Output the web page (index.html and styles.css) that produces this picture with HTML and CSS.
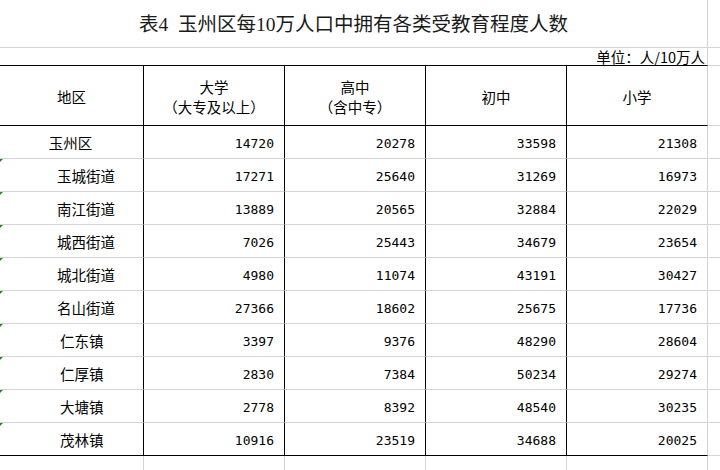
FILE: index.html
```html
<!DOCTYPE html>
<html lang="zh-CN">
<head>
<meta charset="utf-8">
<title>表4 玉州区每10万人口中拥有各类受教育程度人数</title>
<link rel="stylesheet" href="styles.css">
</head>
<body>
<div class="sheet">
  <div class="c title span5 g gb">表4&nbsp;&nbsp;玉州区每10万人口中拥有各类受教育程度人数</div>
  <div class="c gb"></div>

  <div class="c unit span5 g bb">单位：人/10万人</div>
  <div class="c gb"></div>

  <div class="c hd v bb">地区</div>
  <div class="c hd v bb"><span>大学<br>（大专及以上）</span></div>
  <div class="c hd v bb"><span>高中<br>（含中专）</span></div>
  <div class="c hd v bb">初中</div>
  <div class="c hd g bb">小学</div>
  <div class="c gb"></div>

  <div class="c name ctr v gb">玉州区</div>
  <div class="c n v gb">14720</div><div class="c n v gb">20278</div><div class="c n v gb">33598</div><div class="c n g gb">21308</div><div class="c gb"></div>

  <div class="c name sub4 mark v gb">玉城街道</div>
  <div class="c n v gb">17271</div><div class="c n v gb">25640</div><div class="c n v gb">31269</div><div class="c n g gb">16973</div><div class="c gb"></div>

  <div class="c name sub4 mark v gb">南江街道</div>
  <div class="c n v gb">13889</div><div class="c n v gb">20565</div><div class="c n v gb">32884</div><div class="c n g gb">22029</div><div class="c gb"></div>

  <div class="c name sub4 mark v gb">城西街道</div>
  <div class="c n v gb">7026</div><div class="c n v gb">25443</div><div class="c n v gb">34679</div><div class="c n g gb">23654</div><div class="c gb"></div>

  <div class="c name sub4 mark v gb">城北街道</div>
  <div class="c n v gb">4980</div><div class="c n v gb">11074</div><div class="c n v gb">43191</div><div class="c n g gb">30427</div><div class="c gb"></div>

  <div class="c name sub4 mark v gb">名山街道</div>
  <div class="c n v gb">27366</div><div class="c n v gb">18602</div><div class="c n v gb">25675</div><div class="c n g gb">17736</div><div class="c gb"></div>

  <div class="c name sub3 mark v gb">仁东镇</div>
  <div class="c n v gb">3397</div><div class="c n v gb">9376</div><div class="c n v gb">48290</div><div class="c n g gb">28604</div><div class="c gb"></div>

  <div class="c name sub3 mark v gb">仁厚镇</div>
  <div class="c n v gb">2830</div><div class="c n v gb">7384</div><div class="c n v gb">50234</div><div class="c n g gb">29274</div><div class="c gb"></div>

  <div class="c name sub3 mark v gb">大塘镇</div>
  <div class="c n v gb">2778</div><div class="c n v gb">8392</div><div class="c n v gb">48540</div><div class="c n g gb">30235</div><div class="c gb"></div>

  <div class="c name sub3 mark v bb">茂林镇</div>
  <div class="c n v bb">10916</div><div class="c n v bb">23519</div><div class="c n v bb">34688</div><div class="c n g bb">20025</div><div class="c gb"></div>

  <div class="c g gb"></div><div class="c g gb"></div><div class="c g gb"></div><div class="c g gb"></div><div class="c g gb"></div><div class="c gb"></div>
</div>
</body>
</html>
```

FILE: styles.css
```css
html, body {
  margin: 0;
  padding: 0;
  background: #ffffff;
}

body {
  width: 720px;
  height: 470px;
  overflow: hidden;
  font-family: "Noto Sans CJK SC", sans-serif;
  color: #000000;
}

.sheet {
  display: grid;
  grid-template-columns: 144px 141px 141px 141px 141px 1fr;
  grid-template-rows: 48px 18px 60px repeat(10, 33px) 33px;
}

.c {
  box-sizing: border-box;
  display: flex;
  align-items: center;
  font-size: 14.5px;
  line-height: 19px;
  white-space: nowrap;
  position: relative;
}

.span5 { grid-column: 1 / 6; }

.v { border-right: 1px solid #000000; }
.g { border-right: 1px solid #d4d4d4; }
.bb { border-bottom: 1px solid #000000; }
.gb { border-bottom: 1px solid #d4d4d4; }

.title {
  justify-content: center;
  font-family: "Liberation Serif", "Noto Sans CJK SC", serif;
  font-size: 19.5px;
  color: #1a1a1a;
  padding-top: 1px;
}

.unit {
  justify-content: flex-end;
  padding-right: 2px;
  font-size: 14.5px;
  line-height: 17px;
}

.hd {
  justify-content: center;
  text-align: center;
  line-height: 19.5px;
  padding-top: 2px;
}

.name { padding-top: 1px; }
.ctr { justify-content: center; padding-right: 2px; }
.sub4 { padding-left: 57px; }
.sub3 { padding-left: 60px; }

.mark::before {
  content: "";
  position: absolute;
  left: 0;
  top: 0;
  width: 0;
  height: 0;
  border-top: 3px solid #1e8a1e;
  border-right: 3px solid transparent;
}

.n {
  justify-content: flex-end;
  padding-right: 10px;
  padding-top: 2px;
  font-family: "DejaVu Sans Mono", monospace;
  font-size: 13px;
}
```
